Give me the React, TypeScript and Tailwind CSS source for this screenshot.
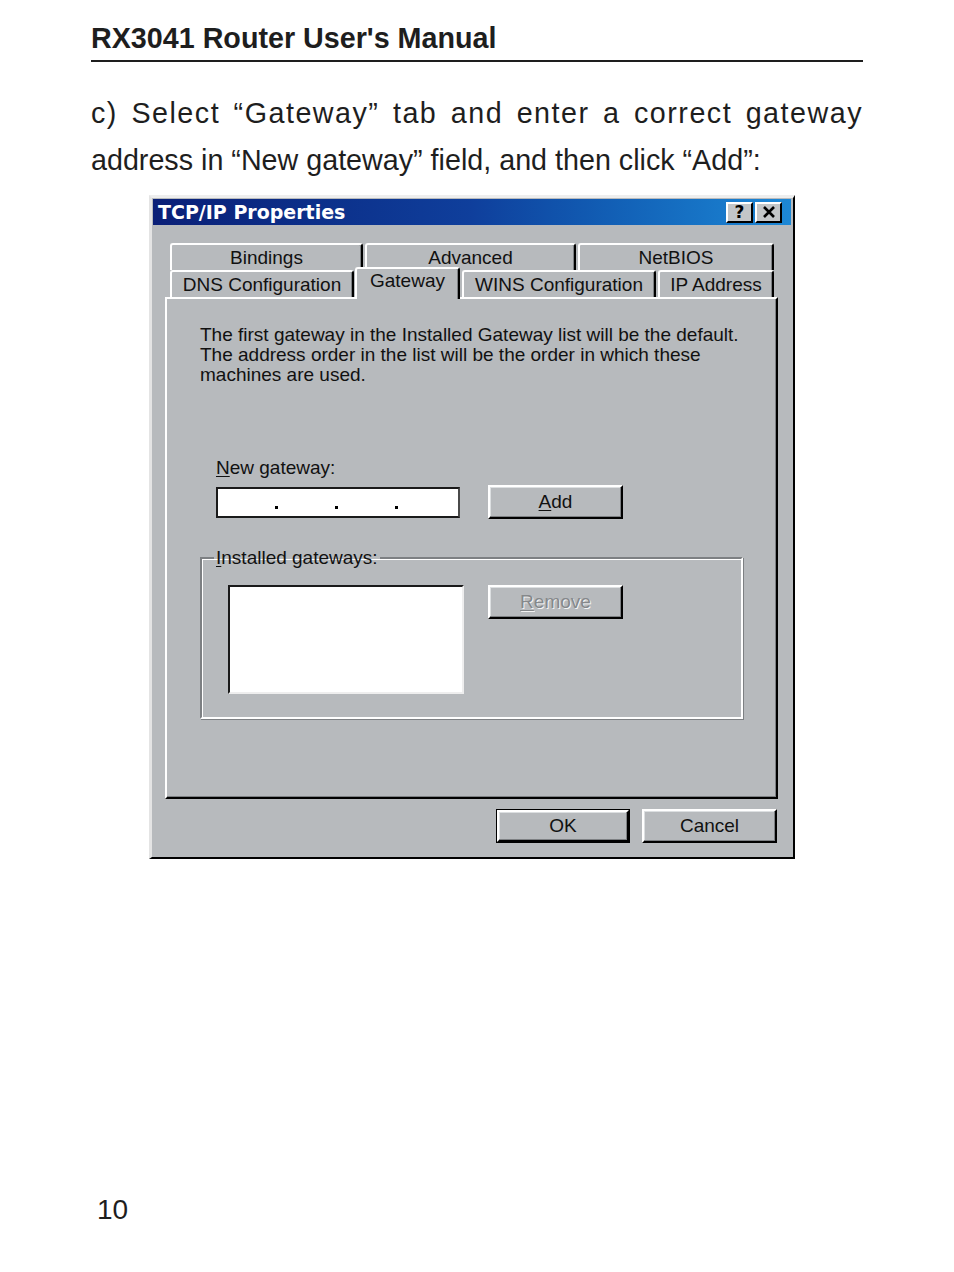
import React from 'react';

const btn =
  'flex items-center justify-center bg-[#b7babd] border-2 border-t-white border-l-white border-r-black border-b-black shadow-[inset_-1px_-1px_#7d8083,inset_1px_1px_#dcdfe1] text-[19px] leading-[20px]';

const tabBase =
  'flex items-center justify-center rounded-t-[3px] bg-[#b7babd] border-t-2 border-l-2 border-r-2 border-t-white border-l-white border-r-black shadow-[inset_-1px_0_#7d8083] text-[19px] leading-[20px] text-[#111]';

const Tab: React.FC<{ label: string; width: string }> = ({ label, width }) => (
  <div className={`${tabBase} ${width} h-[27px]`}>{label}</div>
);

const TcpIpDialog: React.FC = () => {
  return (
    <div
      className="ml-[58px] flex h-[664px] w-[646px] flex-col border-t-[3px] border-l-[3px] border-r-2 border-b-2 border-t-[#eeeeee] border-l-[#e4e4e4] border-r-black border-b-black bg-[#b7babd] p-[1px] pr-[2px]"
      style={{ fontFamily: '"Liberation Sans", Arial, sans-serif' }}
    >
      {/* Title bar */}
      <div className="flex h-[26px] items-center justify-between bg-gradient-to-r from-[#0a1f77] via-[#0f3f9c] to-[#1d88d6] pl-[5px] pr-[9px]">
        <span
          className="text-[19px] font-bold leading-[20px] text-white"
          style={{ fontFamily: '"DejaVu Sans", sans-serif' }}
        >
          TCP/IP Properties
        </span>
        <div className="flex gap-[2px]">
          <div className="flex h-[21px] w-[27px] items-center justify-center border-2 border-t-white border-l-white border-r-black border-b-black bg-[#c3c6c8]">
            <span
              className="text-[17px] font-bold leading-none text-black"
              style={{ fontFamily: '"DejaVu Sans", sans-serif' }}
            >
              ?
            </span>
          </div>
          <div className="flex h-[21px] w-[27px] items-center justify-center border-2 border-t-white border-l-white border-r-black border-b-black bg-[#c3c6c8]">
            <svg width="14" height="12" viewBox="0 0 14 12">
              <path d="M2 1 L12 11 M12 1 L2 11" stroke="#000" strokeWidth="2.6" />
            </svg>
          </div>
        </div>
      </div>

      {/* Body */}
      <div className="flex flex-col pt-[18px] pl-[12px] pr-[13px]">
        {/* Tabs */}
        <div className="flex gap-[2px] pl-[5px]">
          <Tab label="Bindings" width="w-[193px]" />
          <Tab label="Advanced" width="w-[211px]" />
          <Tab label="NetBIOS" width="w-[196px]" />
        </div>
        <div className="flex h-[27px] items-end pl-[5px]">
          <Tab label="DNS Configuration" width="w-[184px]" />
          <div
            className={`${tabBase} relative z-10 ml-[1px] -mb-[2px] h-[32px] w-[105px] pb-[6px]`}
          >
            Gateway
          </div>
          <div className="ml-[2px]">
            <Tab label="WINS Configuration" width="w-[194px]" />
          </div>
          <div className="ml-[2px]">
            <Tab label="IP Address" width="w-[116px]" />
          </div>
        </div>

        {/* Panel */}
        <div className="flex h-[502px] flex-col border-2 border-t-white border-l-white border-r-black border-b-black shadow-[inset_-1px_-1px_#7d8083] pt-[26px] text-[19px] leading-[20px] text-[#111]">
          <div className="pl-[33px]">
            <p>The first gateway in the Installed Gateway list will be the default.</p>
            <p>The address order in the list will be the order in which these</p>
            <p>machines are used.</p>
          </div>

          <div className="mt-[73px] pl-[49px]">
            <span className="underline underline-offset-2">N</span>ew gateway:
          </div>
          <div className="mt-[7px] flex h-[34px] items-center gap-[28px] pl-[49px]">
            <div className="flex h-[31px] w-[244px] items-start gap-[57px] border-2 border-[#1a1a1a] border-r-[#4a4a4a] bg-white pl-[57px] pt-[17px]">
              <span className="h-[3px] w-[3px] bg-black" />
              <span className="h-[3px] w-[3px] bg-black" />
              <span className="h-[3px] w-[3px] bg-black" />
            </div>
            <div className={`${btn} h-[34px] w-[135px] text-[#111]`}>
              <span>
                <span className="underline underline-offset-2">A</span>dd
              </span>
            </div>
          </div>

          <fieldset className="mt-[29px] ml-[33px] w-[543px] border-2 border-t-[#7d8083] border-l-[#7d8083] border-r-white border-b-white shadow-[inset_1px_1px_#ffffff,1px_1px_#7d8083] pl-[26px] pb-[23px] pt-[17px]">
            <legend className="-ml-[14px] px-[2px]">
              <span className="underline underline-offset-2">I</span>nstalled gateways:
            </legend>
            <div className="flex items-start gap-[24px]">
              <div className="h-[109px] w-[236px] border-2 border-t-[#1a1a1a] border-l-[#1a1a1a] border-r-[#eeeeee] border-b-[#eeeeee] bg-white" />
              <div className={`${btn} h-[34px] w-[135px] text-[#85888b] [text-shadow:1px_1px_0_#f4f4f4]`}>
                <span>
                  <span className="underline underline-offset-2">R</span>emove
                </span>
              </div>
            </div>
          </fieldset>
        </div>

        {/* Dialog buttons */}
        <div className="mt-[10px] flex justify-end gap-[12px] pr-[1px] text-[#111]">
          <div className="h-[34px] w-[134px] border border-black">
            <div className={`${btn} h-full w-full`}>OK</div>
          </div>
          <div className={`${btn} h-[34px] w-[135px]`}>Cancel</div>
        </div>
      </div>
    </div>
  );
};

export default function App() {
  return (
    <div
      className="min-h-[1272px] w-[954px] bg-white text-[#1e1e1e]"
      style={{ fontFamily: '"Liberation Sans", Arial, sans-serif' }}
    >
      <div className="w-[863px] pl-[91px] pt-[22px]">
        <h1 className="text-[28.7px] font-bold leading-[32px]">RX3041 Router User's Manual</h1>
        <div className="mt-[6px] h-[2px] bg-[#1e1e1e]" />

        <div className="mt-[28px] text-[28.7px] leading-[47px]">
          <p className="text-justify tracking-[1.5px] [text-align-last:justify]">
            c) Select “Gateway” tab and enter a correct gateway
          </p>
          <p>address in “New gateway” field, and then click “Add”:</p>
        </div>

        <div className="mt-[11px]">
          <TcpIpDialog />
        </div>
      </div>

      <div className="mt-[335px] pl-[97px] text-[28px] leading-[32px]">10</div>
    </div>
  );
}
